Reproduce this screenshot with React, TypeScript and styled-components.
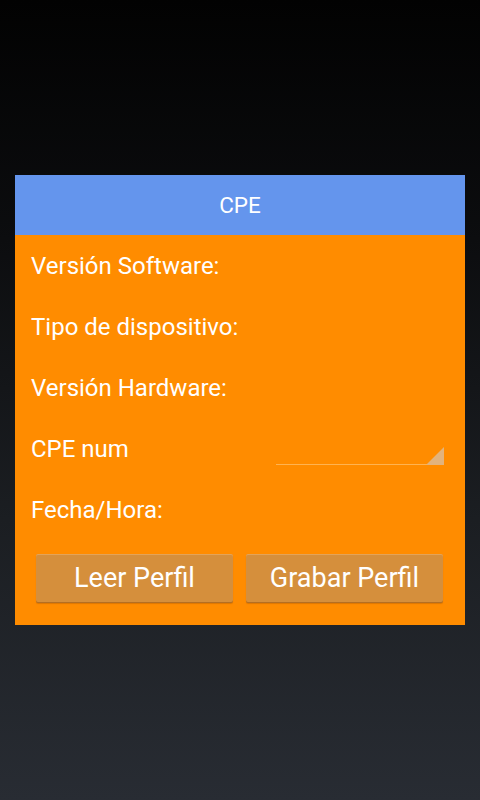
import React from "react";
import styled, { createGlobalStyle } from "styled-components";

const Global = createGlobalStyle`
  html, body { margin: 0; padding: 0; }
  body {
    width: 480px;
    height: 800px;
    overflow: hidden;
    background: linear-gradient(180deg, #020202 0%, #0c0d0f 30%, #1b1e22 65%, #282c33 100%);
    font-family: Roboto, "Noto Sans", sans-serif;
  }
`;

const Screen = styled.div`
  width: 480px;
  height: 800px;
  display: flex;
  flex-direction: column;
  align-items: center;
  padding-top: 175px;
  box-sizing: border-box;
`;

const Dialog = styled.div`
  width: 450px;
  display: flex;
  flex-direction: column;
  background: #ff8c00;
`;

const TitleBar = styled.div`
  height: 60px;
  background: #6495ed;
  color: #ffffff;
  font-size: 22.5px;
  display: flex;
  align-items: center;
  justify-content: center;
`;

const Body = styled.div`
  display: flex;
  flex-direction: column;
  padding: 0 21px 23px 16px;
`;

const Row = styled.div`
  height: 61px;
  display: flex;
  align-items: center;
  justify-content: space-between;
`;

const Label = styled.span`
  color: #ffffff;
  font-size: 24px;
  line-height: 28px;
`;

const Spinner = styled.div`
  position: relative;
  width: 168px;
  height: 32px;
  margin-bottom: -1px;
  border-bottom: 1px solid rgba(255, 226, 180, 0.45);
  box-sizing: border-box;
`;

const SpinnerArrow = styled.svg`
  position: absolute;
  right: 0;
  bottom: -1px;
  width: 18px;
  height: 18px;
`;

const Buttons = styled.div`
  display: flex;
  gap: 13px;
  margin-top: 14px;
  padding-left: 5px;
`;

const Button = styled.button`
  width: 197px;
  height: 48px;
  border: none;
  border-radius: 2px;
  background: #d58f3c;
  box-shadow: inset 0 1px 0 rgba(255, 200, 140, 0.35), 0 1px 0 #b46e22, 0 2px 1px rgba(120, 60, 0, 0.25);
  color: #ffffff;
  font-family: Roboto, "Noto Sans", sans-serif;
  font-size: 27px;
  padding: 0;
  cursor: pointer;
`;

export default function App() {
  return (
    <>
      <Global />
      <Screen>
        <Dialog>
          <TitleBar>CPE</TitleBar>
          <Body>
            <Row>
              <Label>Versión Software:</Label>
            </Row>
            <Row>
              <Label>Tipo de dispositivo:</Label>
            </Row>
            <Row>
              <Label>Versión Hardware:</Label>
            </Row>
            <Row>
              <Label>CPE num</Label>
              <Spinner>
                <SpinnerArrow viewBox="0 0 18 18">
                  <polygon points="18,0 18,18 0,18" fill="#e2b37d" />
                </SpinnerArrow>
              </Spinner>
            </Row>
            <Row>
              <Label>Fecha/Hora:</Label>
            </Row>
            <Buttons>
              <Button>Leer Perfil</Button>
              <Button>Grabar Perfil</Button>
            </Buttons>
          </Body>
        </Dialog>
      </Screen>
    </>
  );
}
